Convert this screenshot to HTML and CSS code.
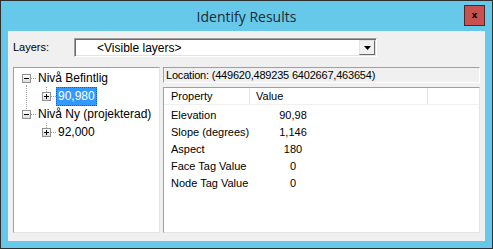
FILE: index.html
```html
<!DOCTYPE html>
<html lang="en">
<head>
    <meta charset="UTF-8">
    <title>Identify Results</title>
    <link rel="stylesheet" href="styles.css">
</head>
<body>
    <div class="window">
        <div class="titlebar">
            <span class="title">Identify Results</span>
            <button class="close-btn">x</button>
        </div>

        <div class="client">
            <div class="layers-row">
                <label class="layers-label">Layers:</label>
                <div class="combo">
                    <span class="combo-text">&lt;Visible layers&gt;</span>
                    <span class="combo-btn">
                        <svg width="7" height="4" viewBox="0 0 7 4"><path d="M0 0h7L3.5 4z" fill="#000"/></svg>
                    </span>
                </div>
            </div>

            <div class="panels">
                <div class="tree">
                    <span class="vline root-line"></span>
                    <div class="node">
                        <span class="expander">
                            <svg width="9" height="9" viewBox="0 0 9 9"><path d="M2 4.5h5" stroke="#000"/></svg>
                        </span>
                        <span class="dots"></span>
                        <span class="label">Nivå Befintlig</span>
                    </div>
                    <div class="node child">
                        <span class="expander">
                            <svg width="9" height="9" viewBox="0 0 9 9"><path d="M2 4.5h5M4.5 2v5" stroke="#000"/></svg>
                        </span>
                        <span class="dots"></span>
                        <span class="label selected">90,980</span>
                    </div>
                    <div class="node">
                        <span class="expander">
                            <svg width="9" height="9" viewBox="0 0 9 9"><path d="M2 4.5h5" stroke="#000"/></svg>
                        </span>
                        <span class="dots"></span>
                        <span class="label">Nivå Ny (projekterad)</span>
                    </div>
                    <div class="node child">
                        <span class="expander">
                            <svg width="9" height="9" viewBox="0 0 9 9"><path d="M2 4.5h5M4.5 2v5" stroke="#000"/></svg>
                        </span>
                        <span class="dots"></span>
                        <span class="label">92,000</span>
                    </div>
                </div>

                <div class="details">
                    <div class="location">Location: (449620,489235 6402667,463654)</div>
                    <div class="listview">
                        <div class="list-header">
                            <span class="col-prop">Property</span>
                            <span class="col-val">Value</span>
                            <span class="col-rest"></span>
                        </div>
                        <div class="list-body">
                            <div class="list-row"><span class="cell-prop">Elevation</span><span class="cell-val">90,98</span></div>
                            <div class="list-row"><span class="cell-prop">Slope (degrees)</span><span class="cell-val">1,146</span></div>
                            <div class="list-row"><span class="cell-prop">Aspect</span><span class="cell-val">180</span></div>
                            <div class="list-row"><span class="cell-prop">Face Tag Value</span><span class="cell-val">0</span></div>
                            <div class="list-row"><span class="cell-prop">Node Tag Value</span><span class="cell-val">0</span></div>
                        </div>
                    </div>
                </div>
            </div>
        </div>
    </div>
</body>
</html>
```

FILE: styles.css
```css
* {
    margin: 0;
    padding: 0;
    box-sizing: border-box;
}

body {
    font-family: "Liberation Sans", Arial, sans-serif;
    font-size: 11px;
    color: #000;
    background-color: #fff;
}

.window {
    width: 493px;
    height: 249px;
    border: 1px solid #2e2e2e;
    background-color: #66c9ea;
    padding: 0 7px 7px 7px;
    display: flex;
    flex-direction: column;
}

.titlebar {
    height: 30px;
    position: relative;
    display: flex;
    align-items: center;
    justify-content: center;
}

.title {
    font-family: "Open Sans", "Noto Sans", sans-serif;
    font-size: 14px;
    color: #1c2a33;
    margin-top: 1px;
}

.close-btn {
    position: absolute;
    right: 0;
    top: 4px;
    width: 21px;
    height: 21px;
    background-color: #c75050;
    border: 1px solid #4d2727;
    color: #000;
    font-family: "DejaVu Sans", sans-serif;
    font-size: 9px;
    font-weight: bold;
    line-height: 17px;
}

.client {
    flex: 1;
    background-color: #f0f0f0;
    padding: 7px 5px 8px 5px;
    display: flex;
    flex-direction: column;
}

.layers-row {
    display: flex;
    align-items: center;
    height: 19px;
}

.layers-label {
    width: 61px;
    margin-top: -2px;
}

.combo {
    width: 303px;
    height: 19px;
    background-color: #fff;
    border-top: 1px solid #a0a0a0;
    border-left: 1px solid #a0a0a0;
    border-right: 1px solid #fff;
    border-bottom: 1px solid #fff;
    box-shadow: inset 1px 1px 0 #696969, inset -1px -1px 0 #e3e3e3;
    display: flex;
    align-items: center;
    justify-content: space-between;
    padding: 0 1px 0 22px;
}

.combo-text {
    font-size: 12px;
}

.combo-btn {
    width: 16px;
    height: 15px;
    background-color: #f0f0f0;
    border-top: 1px solid #e3e3e3;
    border-left: 1px solid #e3e3e3;
    border-right: 1px solid #696969;
    border-bottom: 1px solid #696969;
    display: flex;
    align-items: center;
    justify-content: center;
}

.panels {
    flex: 1;
    display: flex;
    gap: 3px;
    margin-top: 10px;
}

.tree {
    width: 147px;
    background-color: #fff;
    border-top: 1px solid #a0a0a0;
    border-left: 1px solid #a0a0a0;
    border-right: 1px solid #e3e3e3;
    border-bottom: 1px solid #e3e3e3;
    font-size: 12px;
    padding-top: 1px;
    position: relative;
}

.node {
    height: 18px;
    display: flex;
    align-items: center;
    padding-left: 8px;
    position: relative;
}

.node.child {
    padding-left: 28px;
}

.node.child::before {
    content: "";
    position: absolute;
    left: 32px;
    top: 0;
    height: 5px;
    border-left: 1px dotted #a0a0a0;
}

.expander {
    width: 9px;
    height: 9px;
    border: 1px solid #919191;
    background: linear-gradient(#fff, #dcdcdc);
    display: flex;
}

.expander svg {
    margin: -1px;
}

.dots {
    width: 5px;
    border-top: 1px dotted #a0a0a0;
    margin-top: 1px;
}

.label {
    padding: 1px 1px 2px 1px;
    border: 1px dotted transparent;
}

.label.selected {
    background-color: #3399ff;
    color: #fff;
    border-color: #7a4a1a;
}

.vline {
    position: absolute;
    border-left: 1px dotted #a0a0a0;
}

.root-line {
    left: 12px;
    top: 17px;
    height: 24px;
}

.details {
    flex: 1;
    display: flex;
    flex-direction: column;
    gap: 4px;
}

.location {
    height: 16px;
    border-top: 1px solid #a0a0a0;
    border-left: 1px solid #a0a0a0;
    border-right: 1px solid #fff;
    border-bottom: 1px solid #fff;
    padding-left: 2px;
    line-height: 14px;
    white-space: nowrap;
    letter-spacing: -0.2px;
}

.listview {
    flex: 1;
    background-color: #fff;
    border-top: 1px solid #a0a0a0;
    border-left: 1px solid #a0a0a0;
    border-right: 1px solid #e3e3e3;
    border-bottom: 1px solid #e3e3e3;
}

.list-header {
    display: flex;
    height: 17px;
    line-height: 17px;
    border-bottom: 1px solid #f0f0f0;
}

.col-prop {
    width: 86px;
    padding-left: 7px;
    border-right: 1px solid #e5e5e5;
}

.col-val {
    width: 178px;
    padding-left: 6px;
    border-right: 1px solid #e5e5e5;
}

.col-rest {
    flex: 1;
}

.list-body {
    padding-top: 2px;
}

.list-row {
    display: flex;
    height: 17px;
    line-height: 17px;
}

.cell-prop {
    width: 100px;
    padding-left: 7px;
}

.cell-val {
    width: 58px;
    text-align: center;
}
```
